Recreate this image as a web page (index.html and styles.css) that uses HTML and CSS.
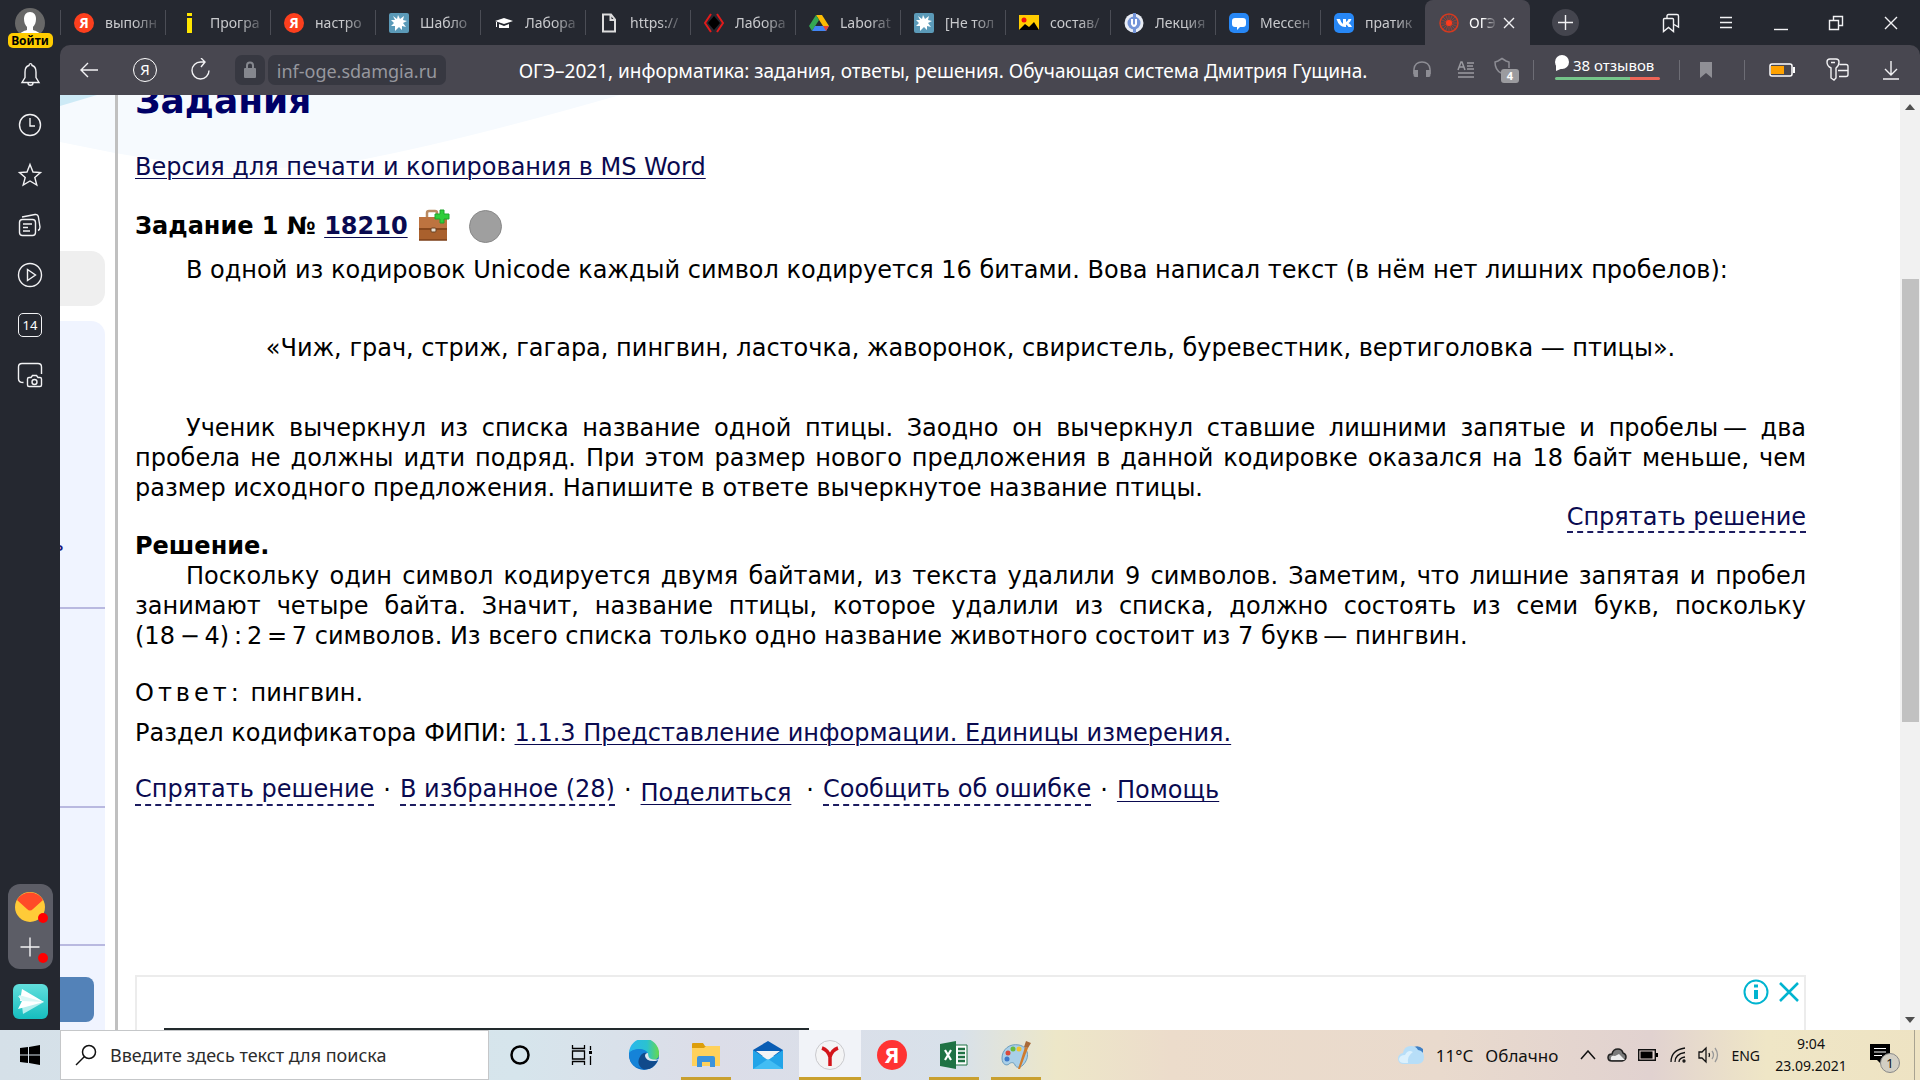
FILE: index.html
```html
<!DOCTYPE html>
<html lang="ru">
<head>
<meta charset="utf-8">
<title>ОГЭ–2021, информатика</title>
<link rel="stylesheet" href="styles.css">
</head>
<body>
<div class="browser">
  <aside class="rail">
    <button class="profile" aria-label="Профиль">
      <svg width="30" height="30" viewBox="0 0 30 30"><defs><clipPath id="av"><circle cx="15" cy="15" r="15"/></clipPath></defs><circle cx="15" cy="15" r="15" fill="#686868"/><g clip-path="url(#av)" fill="#fff"><path d="M15 4c4 0 6 3 6 7 0 3-1 6-3 8v3c3 1 8 2 9 8H3c1-6 6-7 9-8v-3c-2-2-3-5-3-8 0-4 2-7 6-7z"/></g></svg>
      <span class="login">Войти</span>
    </button>
    <nav class="rail-nav">
      <button aria-label="Уведомления"><svg class="ln" width="26" height="26" viewBox="0 0 26 26"><path d="M5 20.500h17l-3-5V10c0-4-2-6-4-6.500C15 1 12 1 12 3.500 10 4 8 6 8 10v5.500zM11 21c0 3 5 3 5 0"/></svg></button>
      <button aria-label="История"><svg class="ln" width="26" height="26" viewBox="0 0 26 26"><circle cx="13" cy="13" r="10.500"/><path d="M13 6v8h5"/></svg></button>
      <button aria-label="Избранное"><svg class="ln" width="26" height="26" viewBox="0 0 26 26"><path d="M13 2.500l3 7.500 7.500.500-5.700 5 2 7.500L13 19l-6.800 4 2-7.500-5.700-5L10 10z"/></svg></button>
      <button aria-label="Коллекции"><svg class="ln" width="26" height="26" viewBox="0 0 26 26"><rect x="2.500" y="7.500" width="16" height="16" rx="3"/><path d="M5 5l13-2.500c2-.3 3 .5 3.300 2L23 15c0 2-.7 3-2 3.500M6 12h9M6 15.500h5M6 19h7"/></svg></button>
      <button aria-label="Видео"><svg class="ln" width="26" height="26" viewBox="0 0 26 26"><circle cx="13" cy="13" r="11.500"/><path d="M10.500 7.500v11l8-5.500z"/></svg></button>
      <button aria-label="Календарь"><span class="date">14</span></button>
      <button aria-label="Снимок"><svg class="ln" width="26" height="26" viewBox="0 0 26 26"><path d="M6.500 20.500C3 20.500 1.500 19 1.500 17V5c0-2 1.500-3.500 3.500-3.500h16c2 0 3.500 1.500 3.500 3.500v7M10.500 17c0-1 .5-1.500 1.500-1.500h2l1.500-2h4l1.500 2h2c1 0 1.500.5 1.500 1.500v6c0 1-.5 1.500-1.500 1.500H12c-1 0-1.500-.5-1.500-1.500z"/><circle cx="17.500" cy="20" r="2.500"/></svg></button>
    </nav>
    <div class="dock">
      <button class="dotted" aria-label="Почта"><svg width="30" height="30" viewBox="0 0 30 30"><circle cx="15" cy="15" r="15" fill="#ffcb38"/><path d="M2 8A15 15 0 0 1 28 8L18 17q-3 3-6 0z" fill="#ff4a28"/></svg></button>
      <button class="dotted" aria-label="Добавить"><svg class="ln" width="30" height="30" viewBox="0 0 30 30"><path d="M15 5.500v19M5.500 15h19"/></svg></button>
    </div>
    <button class="send" aria-label="Мессенджер"><svg width="35" height="35" viewBox="0 0 35 35"><defs><linearGradient id="tq" x2="0" y2="1"><stop stop-color="#62dfdc"/><stop offset="1" stop-color="#16bebf"/></linearGradient></defs><rect width="35" height="35" rx="6" fill="url(#tq)"/><path d="M9 5l22 13-24-1z" fill="#fff"/><path d="M31 18L10 30l-1-8z" fill="#b5efee"/><path d="M5 12l4 5-4 8 26-7z" fill="#fff"/><path d="M6 11l3 6 22 1z" fill="#d9f7f6"/></svg></button>
  </aside>

  <div class="window">
    <header class="tabs">
      <a class="tab" href="#"><span class="ya">Я</span><span class="cap">выполн</span></a>
      <a class="tab" href="#"><svg width="20" height="20" viewBox="0 0 20 20"><path d="M8 0h5v3H8zM8 5h5v15H8z" fill="#ffe600"/></svg><span class="cap">Програ</span></a>
      <a class="tab" href="#"><span class="ya">Я</span><span class="cap">настро</span></a>
      <a class="tab" href="#"><svg width="20" height="20" viewBox="0 0 20 20"><rect width="20" height="20" rx="2" fill="#5b9ab8"/><path d="M4 3l4 3 1-4 2 4 4-3-1 4 4 1-4 2 3 4-4-1 0 4-3-3-4 4 0-5-4 0 3-3-3-3 4 0z" fill="#fff"/></svg><span class="cap">Шабло</span></a>
      <a class="tab" href="#"><svg width="20" height="20" viewBox="0 0 20 20"><path d="M1 8l9-3 9 3-9 3zM5 11l5 2 5-2v4H5zM2 9h1v5H2z" fill="#fff"/></svg><span class="cap">Лабора</span></a>
      <a class="tab" href="#"><svg width="20" height="20" viewBox="0 0 20 20"><path d="M4 1.500h8l4 5v12H4zM11.500 1.500V7H16" fill="none" stroke="#ddd" stroke-width="2"/></svg><span class="cap">https://</span></a>
      <a class="tab" href="#"><svg width="20" height="20" viewBox="0 0 20 20"><path d="M10 3l6 7-6 7-6-7z" fill="#000"/><path d="M7 1l-6 9 6 9M13 1l6 9-6 9" fill="none" stroke="#e11b1b" stroke-width="2"/></svg><span class="cap">Лабора</span></a>
      <a class="tab" href="#"><svg width="20" height="20" viewBox="0 0 20 20"><path d="M7 2h6l7 11h-6z" fill="#fbbc04"/><path d="M7 2l3 5-7 11-3-5z" fill="#34a853"/><path d="M6 13h14l-3 5H3z" fill="#4285f4"/><path d="M14 13h6l-3 5z" fill="#ea4335"/></svg><span class="cap">Laborat</span></a>
      <a class="tab" href="#"><svg width="20" height="20" viewBox="0 0 20 20"><rect width="20" height="20" rx="2" fill="#5b9ab8"/><path d="M4 3l4 3 1-4 2 4 4-3-1 4 4 1-4 2 3 4-4-1 0 4-3-3-4 4 0-5-4 0 3-3-3-3 4 0z" fill="#fff"/></svg><span class="cap">[Не тол</span></a>
      <a class="tab" href="#"><svg width="20" height="20" viewBox="0 0 20 20"><path d="M0 2h20v15H0z" fill="#fc0"/><path d="M0 17l6-6 4 3 5-5 5 8z" fill="#000"/><circle cx="5" cy="7" r="2.500" fill="#e11"/></svg><span class="cap">состав/</span></a>
      <a class="tab" href="#"><svg width="20" height="20" viewBox="0 0 20 20"><circle cx="10" cy="10" r="9.500" fill="#e8ecf4"/><path d="M9 0h3v4H9zM9 16h3v4H9z" fill="#7394d8"/><circle cx="10" cy="10" r="6.500" fill="#7394d8"/><path d="M8 6v5q2 4 4 0V6" fill="none" stroke="#fff" stroke-width="2"/></svg><span class="cap">Лекция</span></a>
      <a class="tab" href="#"><svg width="20" height="20" viewBox="0 0 20 20"><rect width="20" height="20" rx="5" fill="#2787f5"/><path d="M6 5h8q3 0 3 3v3q0 3-3 3h-3l-3 3v-3H6q-3 0-3-3V8q0-3 3-3z" fill="#fff"/></svg><span class="cap">Мессен</span></a>
      <a class="tab" href="#"><svg width="20" height="20" viewBox="0 0 20 20"><rect width="20" height="20" rx="5" fill="#2787f5"/><path d="M2.500 6h3.500q1 4 3 5V6h3v3q2-1 2.500-3h3q-1 3-3 4 2.500 1.500 3.500 4h-3.500q-1-2-2.500-2.500V14h-1q-6 0-8.500-8z" fill="#fff"/></svg><span class="cap">пратик</span></a>
      <a class="tab active" href="#"><svg width="20" height="20" viewBox="0 0 20 20"><g fill="none" stroke="#d23a20" stroke-width="1"><circle cx="10" cy="10" r="9" stroke-width="1.500"/><path d="M10 1v18M1 10h18M3.600 3.600l12.800 12.800M16.400 3.600L3.600 16.400M6.500 1.700l7 16.600M13.500 1.700l-7 16.600M1.700 6.500l16.600 7M1.700 13.500l16.600-7" stroke-width=".6"/></g><circle cx="10" cy="10" r="3" fill="#ff3a1c"/></svg><span class="cap">ОГЭ</span><svg class="ln" width="12" height="12" viewBox="0 0 12 12"><path d="M1 1l10 10M11 1L1 11"/></svg></a>
      <button class="newtab" aria-label="Новая вкладка"><svg class="ln" width="15" height="15" viewBox="0 0 15 15"><path d="M7.500 0v15M0 7.500h15"/></svg></button>
      <div class="wincontrols">
        <button aria-label="Закладки"><svg class="ln" width="20" height="20" viewBox="0 0 20 20"><path d="M2.500 6.500q0-1 1-1h8q1 0 1 1v12l-5-4-5 4zM6 5V3q0-1.500 1.500-1.500H16q1.500 0 1.500 1.500v11L13 11.500"/></svg></button>
        <button aria-label="Меню"><svg class="ln" width="20" height="20" viewBox="0 0 20 20"><path d="M4 4.500h12M4 9.500h12M4 14.500h12"/></svg></button>
        <button aria-label="Свернуть"><svg class="ln" width="20" height="20" viewBox="0 0 20 20"><path d="M3 16.500h14"/></svg></button>
        <button aria-label="Развернуть"><svg class="ln" width="20" height="20" viewBox="0 0 20 20"><path d="M3.500 7.500h9v9h-9zM7.500 7V3.500h9v9H13"/></svg></button>
        <button aria-label="Закрыть"><svg class="ln" width="20" height="20" viewBox="0 0 20 20"><path d="M4 4l12 12M16 4L4 16"/></svg></button>
      </div>
    </header>

    <div class="toolbar">
      <div class="nav">
        <button aria-label="Назад"><svg class="ln" width="24" height="24" viewBox="0 0 24 24"><path d="M21 12H4M11 5l-7 7 7 7"/></svg></button>
        <button aria-label="Яндекс"><span class="ya-ring">Я</span></button>
        <button aria-label="Обновить"><svg class="ln" width="24" height="24" viewBox="0 0 24 24"><path d="M20 12.500a8.500 8.500 0 1 1-8.500-8.500H16M12 0l4 4-4 5"/></svg></button>
      </div>
      <div class="address">
        <button class="lock" aria-label="Защищено"><svg width="14" height="18" viewBox="0 0 14 18"><rect x="1" y="7" width="12" height="10" rx="1" fill="#85878e"/><path d="M4 8V4.500q0-3 3-3t3 3V8" fill="none" stroke="#85878e" stroke-width="2"/></svg></button>
        <a class="domain" href="#">inf-oge.sdamgia.ru</a>
      </div>
      <div class="pagetitle">ОГЭ–2021, информатика: задания, ответы, решения. Обучающая система Дмитрия Гущина.</div>
      <div class="tools">
        <button aria-label="Слушать"><svg width="20" height="20" viewBox="0 0 20 20"><path d="M2 14V9q1-7 8-7t8 7v5" fill="none" stroke="#8d8d94" stroke-width="1.500"/><path d="M1.500 10H6v7H3q-1.500 0-1.500-2zM14 10h4.500v5q0 2-1.500 2h-3z" fill="#8d8d94"/></svg></button>
        <button aria-label="Режим чтения"><svg width="20" height="20" viewBox="0 0 20 20"><path d="M2 10l3-8h1l3 8M3 7h5M11 3h7M11 9h7M2 13h16M2 17h16M11 6h6" fill="none" stroke="#9a9aa0" stroke-width="1.500"/></svg></button>
        <button class="shield" aria-label="Блокировка"><svg width="26" height="26" viewBox="0 0 26 26"><path d="M8 16Q2 13 2 5l3-1 4-2.500L13 4l3 1v6" fill="none" stroke="#8d8d94" stroke-width="1.500"/></svg><span class="count">4</span></button>
        <i class="sep near"></i>
        <a class="reviews" href="#"><span class="revtext"><svg width="14" height="16" viewBox="0 0 14 16"><circle cx="7" cy="7" r="7" fill="#fff"/><path d="M1 10l0 6 7-3z" fill="#fff"/></svg>38 отзывов</span><span class="bar"></span></a>
        <i class="sep mid"></i>
        <button class="mark" aria-label="Закладка"><svg width="14" height="18" viewBox="0 0 14 18"><path d="M1 1h12v16l-6-5-6 5z" fill="#8f8f95"/></svg></button>
        <i class="sep far"></i>
        <button aria-label="Батарея"><svg width="26" height="14" viewBox="0 0 26 14"><rect x="1" y="1" width="22" height="12" rx="2" fill="none" stroke="#fff" stroke-width="1.500"/><path d="M24 4h2v6h-2z" fill="#fff"/><path d="M2 3h13v8H2z" fill="#ffa200"/></svg></button>
        <button class="far" aria-label="Пароли"><svg class="ln" width="24" height="24" viewBox="0 0 24 24"><path d="M5 10Q1 8 1 4q0-3 3-3h6q3 0 3 3 0 4-3 6v10l-2 2-3-2zM5 4.500h4M13.500 6.500H20q2 0 2 2v8q0 2-2 2h-7M12 12.500h10"/></svg></button>
        <button class="far" aria-label="Загрузки"><svg class="ln" width="20" height="20" viewBox="0 0 20 20"><path d="M10 1v14M4 9l6 6 6-6M2 19h16"/></svg></button>
      </div>
    </div>

    <div class="viewport">
      <svg class="wave" width="600" height="80" viewBox="0 0 600 80"><path d="M0 0V47L55 58Q200 84 300 65T560 0z" fill="#f6fafe"/><path d="M0 0H37L0 11z" fill="#cdeaf6"/></svg>
      <div class="sidecol">
        <div class="greybox"></div>
        <div class="panel">
          <section class="s1"><a href="#">ь</a></section>
          <section class="s2"></section>
          <section class="s3"></section>
          <section class="s4"><button class="bluebtn" aria-label="Открыть"></button></section>
        </div>
      </div>
      <main class="article">
        <h1>Задания</h1>
        <p class="print"><a href="#">Версия для печати и копирования в MS Word</a></p>
        <div class="task">
          <span>Задание 1 № <a href="#">18210</a></span>
          <svg width="34" height="34" viewBox="0 0 34 34"><path d="M10 9V4q0-2 2-2h6q2 0 2 2v5" fill="none" stroke="#b98a62" stroke-width="2.500"/><path d="M2 8h28v23H2z" fill="#a9602d"/><path d="M2 8h28v11H2z" fill="#bd7340"/><path d="M2 20h28M2 31h28" stroke="#7c3f18" stroke-width="1.500"/><rect x="14" y="19" width="5" height="4" rx="1" fill="#e8e0d4" stroke="#6a4020"/><path d="M23 1h4v4h5v5h-5v4h-4v-4h-5V5h5z" fill="#2fce3b" stroke="#1ea52c"/></svg>
          <i class="status"></i>
        </div>
        <p class="ind">В одной из кодировок Unicode каждый символ кодируется 16 битами. Вова написал текст (в нём нет лишних пробелов):</p>
        <p class="birds">«Чиж, грач, стриж, гагара, пингвин, ласточка, жаворонок, свиристель, буревестник, вертиголовка — птицы».</p>
        <p class="ind">Ученик вычеркнул из списка название одной птицы. Заодно он вычеркнул ставшие лишними запятые и пробелы&#8239;— два пробела не должны идти подряд. При этом размер нового предложения в данной кодировке оказался на 18 байт меньше, чем размер исходного предложения. Напишите в ответе вычеркнутое название птицы.</p>
        <div class="hide"><a class="dash" href="#">Спрятать решение</a></div>
        <h2>Решение.</h2>
        <p class="ind">Поскольку один символ кодируется двумя байтами, из текста удалили 9 символов. Заметим, что лишние запятая и пробел занимают четыре байта. Значит, название птицы, которое удалили из списка, должно состоять из семи букв, поскольку (18&#8239;−&#8239;4)&#8239;:&#8239;2&#8239;=&#8239;7 символов. Из всего списка только одно название животного состоит из 7 букв&#8239;— пингвин.</p>
        <p class="answer"><span class="spaced">Ответ:</span> пингвин.</p>
        <p class="codif">Раздел кодификатора ФИПИ: <a href="#">1.1.3 Представление информации. Единицы измерения.</a></p>
        <div class="links"><a class="dash" href="#">Спрятать решение</a><span>·</span><a class="dash" href="#">В избранное (28)</a><span>·</span><a class="share" href="#">Поделиться</a><span>·</span><a class="dash" href="#">Сообщить об ошибке</a><span>·</span><a href="#">Помощь</a></div>
        <div class="ad">
          <div class="adicons">
            <button aria-label="Сведения"><svg width="26" height="26" viewBox="0 0 26 26"><circle cx="13" cy="13" r="11.500" fill="none" stroke="#00b4d0" stroke-width="2"/><path d="M11 5.500h4v3h-4zM11 11h4v9h-4z" fill="#00b4d0"/></svg></button>
            <button aria-label="Закрыть рекламу"><svg width="20" height="20" viewBox="0 0 20 20"><path d="M1 1l18 18M19 1L1 19" stroke="#00b4d0" stroke-width="2.500"/></svg></button>
          </div>
          <div class="adline"></div>
        </div>
      </main>
      <div class="scroll"><svg width="10" height="6" viewBox="0 0 10 6"><path d="M0 6l5-6 5 6z" fill="#505050"/></svg><div class="track"><div class="thumb"></div></div><svg width="10" height="6" viewBox="0 0 10 6"><path d="M0 0l5 6 5-6z" fill="#505050"/></svg></div>
    </div>
  </div>
</div>

<footer class="taskbar">
  <button class="start" aria-label="Пуск"><svg width="20" height="20" viewBox="0 0 20 20"><path d="M0 3l8-1v7.500H0zM9 2l11-2v9.500H9zM0 10.500h8V18l-8-1zM9 10.500h11V20L9 18z"/></svg></button>
  <label class="search"><svg width="22" height="22" viewBox="0 0 22 22"><circle cx="14" cy="8" r="6.500" fill="none" stroke="#111" stroke-width="1.500"/><path d="M9.500 12.500L1 21" stroke="#111" stroke-width="1.500"/></svg><input type="text" aria-label="Поиск" placeholder="Введите здесь текст для поиска"></label>
  <div class="apps">
    <button aria-label="Кортана"><svg width="20" height="20" viewBox="0 0 20 20"><circle cx="10" cy="10" r="8.500" fill="none" stroke="#000" stroke-width="2.500"/></svg></button>
    <button aria-label="Представление задач"><svg width="22" height="20" viewBox="0 0 22 20"><path d="M1.500 0v3.500h12V0M1.500 20v-3.500h12V20M1.500 6h12v8h-12zM19.500 1v4M19.500 11v9" fill="none" stroke="#000" stroke-width="1.300"/><path d="M18 6h3v3h-3z"/></svg></button>
    <button aria-label="Edge"><svg width="30" height="30" viewBox="0 0 30 30"><defs><linearGradient id="eg"><stop stop-color="#2ab7ee"/><stop offset=".6" stop-color="#2bc2d0"/><stop offset="1" stop-color="#67d94c"/></linearGradient></defs><circle cx="15" cy="15" r="15" fill="#0c6ec6"/><path d="M0 13A15 15 0 0 1 30 14q0 6-7 6-4 0-5-2 1-1 1-4c-1-4-12-7-19-1z" fill="url(#eg)"/><path d="M0 13C5 7 18 8 19 14q-3-3-7 1-5 6 0 13Q0 27 0 13z" fill="#1583d8"/><path d="M12 15q4-4 7-1-2 5 2 7 4 1 8-1-5 11-15 9-8-5-2-14z" fill="#114a8b"/><path d="M19 13q-3 0-3 3 1 5 8 5 5 0 6-2-4 1-8 0-3-1-3-6z" fill="#dfe6ef"/></svg></button>
    <button class="run" aria-label="Проводник"><svg width="28" height="24" viewBox="0 0 28 24"><path d="M0 1q0-1 1-1h10l2 3h14v20H0z" fill="#dd9e0b"/><path d="M0 5h12l2-2h14v20H0z" fill="#ffd15b"/><path d="M5 24v-9q0-2 2-2h14q2 0 2 2v9h-5v-5h-8v5z" fill="#3b93dc"/></svg></button>
    <button aria-label="Почта Windows"><svg width="30" height="28" viewBox="0 0 30 28"><path d="M0 9L15 0l15 9v6H0z" fill="#0a5db4"/><path d="M0 9l15 10 15-10v19H0z" fill="#23a4e8"/><path d="M3 10h24l-12 9z" fill="#f3f3f5"/><path d="M0 28l15-10 15 10z" fill="#42bdf4"/></svg></button>
    <button class="run wide" aria-label="Яндекс Браузер"><svg width="30" height="30" viewBox="0 0 30 30"><circle cx="15" cy="15" r="14.500" fill="#f4f4f5" stroke="#c9c9cd"/><path d="M7 8q6 2 8 9 2-7 8-9M15 15v11" fill="none" stroke="#d3151b" stroke-width="3.500"/></svg></button>
    <button aria-label="Яндекс"><span class="ya big">Я</span></button>
    <button class="run" aria-label="Excel"><svg width="28" height="28" viewBox="0 0 28 28"><path d="M15 4h12v20H15z" fill="#fff" stroke="#1f7244"/><path d="M18 8h7M18 12h7M18 16h7M18 20h7" stroke="#1f7244" stroke-width="2.500"/><path d="M0 3l16-3v28L0 25z" fill="#1f7244"/><path d="M5 9l6 10M11 9L5 19" stroke="#fff" stroke-width="2.200"/></svg></button>
    <button class="run" aria-label="Paint"><svg width="30" height="30" viewBox="0 0 30 30"><path d="M18 5C8 3 1 10 1 18c0 7 5 8 7 6s5-2 6 1 5 3 8 0c7-7 6-18-4-20z" fill="#a9cfe8" stroke="#6c9dbd"/><circle cx="12" cy="9" r="2.500" fill="#67bb3e"/><circle cx="7" cy="13" r="2.500" fill="#d94a3a"/><circle cx="18" cy="9" r="2.500" fill="#f2c230"/><circle cx="6" cy="19" r="2.500" fill="#3e79c9"/><path d="M17 29l7-22 3 1-8 21z" fill="#cf7b2c"/><path d="M23 7l2-6 5 2-3 5z" fill="#a86a3a"/></svg></button>
  </div>
  <div class="tray">
    <a class="weather" href="#"><svg width="26" height="20" viewBox="0 0 26 20"><path d="M14 3q6-4 11 1v8z" fill="#3e7fc4"/><path d="M6 19Q0 19 0 13.500 0 9 5 8q1-7 8-7 5 0 7 4 6 1 6 7t-6 7z" fill="#b7def8"/><path d="M6 18q-5 0-5-4 1-4 6-4 3-6 8-3-6 4-5 11z" fill="#dcf1fd"/></svg><span class="temp">11°C</span><span>Облачно</span></a>
    <svg width="16" height="10" viewBox="0 0 16 10"><path d="M1 9l7-8 7 8" fill="none" stroke="#111" stroke-width="1.500"/></svg>
    <svg width="20" height="14" viewBox="0 0 20 14"><path d="M5 13Q1 13 1 9.500T5 6q1-5 6-5 4 0 5 4 3 1 3 4t-4 4z" fill="#7b7b7b" stroke="#222" stroke-width="1.500"/><path d="M4 12q-1-5 4-4l4-2 6 6z" fill="#eee"/></svg>
    <svg width="20" height="12" viewBox="0 0 20 12"><path d="M.7.700h16.600v10.600H.7z" fill="none" stroke="#111" stroke-width="1.400"/><path d="M2.500 2.500h12v7h-12zM18 4h2v4h-2z"/></svg>
    <svg width="18" height="16" viewBox="0 0 18 16" fill="none" stroke="#111" stroke-width="1.300"><path d="M2 15Q2 3 16 1M6 15q0-8 10-9.500M10 15q0-4 6-5"/><circle cx="15" cy="14" r="1"/></svg>
    <svg width="22" height="18" viewBox="0 0 22 18" fill="none" stroke="#111" stroke-width="1.300"><path d="M1 6h3l4-4v14l-4-4H1zM11 7q1 2 0 4"/><path d="M14 5q3 4 0 8M17 2q5 7 0 14" stroke="#999"/></svg>
    <span class="lang">ENG</span>
    <time class="clock"><span>9:04</span><span>23.09.2021</span></time>
    <button class="notes" aria-label="Центр уведомлений"><svg width="20" height="20" viewBox="0 0 20 20"><path d="M0 0h20v16h-9v4l-4-4H0z"/><path d="M4 4.500h12M4 8h12M4 11.500h8" stroke="#fff" stroke-width="1.200"/></svg><span class="badge">1</span></button>
  </div>
</footer>
</body>
</html>
```
FILE: styles.css
```css
* { box-sizing: border-box; }
body {
  margin: 0;
  height: 100vh;
  display: flex;
  flex-direction: column;
  overflow: hidden;
  font-family: "Noto Sans", "Open Sans", sans-serif;
  font-size: 16px;
  background: #252830;
}
button {
  border: 0;
  padding: 0;
  margin: 0;
  background: none;
  color: inherit;
  font: inherit;
  display: flex;
  align-items: center;
  justify-content: center;
}
svg { display: block; flex: none; }
h1, h2, p { margin: 0; }
.ln { fill: none; stroke: #f2f2f4; stroke-width: 1.4; }

.browser { flex: 1; min-height: 0; display: flex; }

/* Left rail */
.rail {
  width: 60px;
  flex: none;
  display: flex;
  flex-direction: column;
  align-items: center;
  padding: 8px 0 11px;
  color: #fff;
}
.profile { flex-direction: column; height: 40px; justify-content: flex-start; }
.login {
  margin-top: -5px;
  width: 45px;
  height: 15px;
  border-radius: 5px;
  background: #fc0;
  color: #000;
  font-size: 12px;
  font-weight: 700;
  line-height: 15px;
}
.rail-nav { display: flex; flex-direction: column; gap: 24px; margin-top: 14px; }
.date {
  width: 24px;
  height: 24px;
  border: 1px solid #f2f2f4;
  border-radius: 5px;
  font-size: 13px;
  line-height: 22px;
}
.rail-nav button { height: 26px; }
.dock {
  margin-top: auto;
  width: 45px;
  height: 85px;
  border-radius: 12px;
  background: #5c5d66;
  display: flex;
  flex-direction: column;
  align-items: center;
  justify-content: space-between;
  padding: 8px 0 7px;
}
.dotted { position: relative; }
.dotted::after {
  content: "";
  position: absolute;
  right: -3px;
  bottom: -1px;
  width: 10px;
  height: 10px;
  border-radius: 50%;
  background: #f00;
}
.send { margin-top: 15px; }

/* Tab strip */
.window { flex: 1; min-width: 0; display: flex; flex-direction: column; }
.tabs { height: 45px; flex: none; display: flex; align-items: center; }
.tab {
  width: 105px;
  height: 25px;
  flex: none;
  display: flex;
  align-items: center;
  gap: 11px;
  padding: 0 2px 0 13px;
  border-left: 1px solid #4b4d55;
  color: #c9cacd;
  font-size: 14px;
  text-decoration: none;
}
.cap {
  flex: 1;
  min-width: 0;
  overflow: hidden;
  white-space: nowrap;
  -webkit-mask-image: linear-gradient(90deg, #000 50%, transparent);
  mask-image: linear-gradient(90deg, #000 50%, transparent);
}
.tab.active {
  height: 45px;
  background: #484750;
  border-left: 0;
  border-radius: 8px 8px 0 0;
  color: #fff;
  padding: 0 15px 0 14px;
  gap: 10px;
}
.active .cap { margin-right: -4px; }
.ya {
  width: 20px;
  height: 20px;
  flex: none;
  border-radius: 50%;
  background: #fc3f1d;
  color: #fff;
  font-size: 14px;
  font-weight: 700;
  line-height: 20px;
  text-align: center;
}
.ya.big { width: 30px; height: 30px; background: #ff3333; font-size: 22px; line-height: 29px; }
.newtab {
  width: 27px;
  height: 27px;
  margin-left: 22px;
  border-radius: 50%;
  background: #44454e;
}
.wincontrols { display: flex; gap: 35px; margin-left: auto; padding-right: 19px; }

/* Toolbar */
.toolbar {
  height: 50px;
  flex: none;
  display: flex;
  align-items: center;
  background: #484750;
  border-radius: 10px 10px 0 0;
  padding: 0 19px 0 17px;
  color: #fff;
}
.nav { display: flex; gap: 32px; }
.ya-ring {
  width: 24px;
  height: 24px;
  border: 1px solid #fff;
  border-radius: 50%;
  font-size: 15px;
  line-height: 21px;
}
.address { display: flex; gap: 3px; margin-left: 22px; }
.lock { width: 30px; height: 30px; border-radius: 7px; background: #373841; }
.domain {
  width: 178px;
  height: 30px;
  border-radius: 7px;
  background: #373841;
  color: #96979e;
  font-size: 18px;
  line-height: 32px;
  text-align: center;
  text-decoration: none;
}
.pagetitle {
  flex: 1;
  min-width: 0;
  padding: 2px 0 0 52px;
  text-align: center;
  white-space: nowrap;
  font-size: 19px;
}
.tools { display: flex; align-items: center; }
.tools > * { margin-left: 24px; }
.sep { width: 1px; height: 20px; background: #6d6d75; }
.tools > .shield { position: relative; margin-left: 17px; }
.tools > .near { margin-left: 14px; }
.tools > .mid, .tools > .mark { margin-left: 19px; }
.tools > .far { margin-left: 31px; }
.count {
  position: absolute;
  right: 0;
  bottom: 0;
  width: 18px;
  height: 14px;
  border-radius: 3px;
  background: #9b9b9f;
  font-size: 11px;
  font-weight: 700;
  line-height: 14px;
}
.tools > .reviews { margin: 0 0 5px 21px; }
.reviews { width: 105px; color: #fff; text-decoration: none; }
.revtext { display: flex; gap: 4px; font-size: 15px; line-height: 20px; white-space: nowrap; }
.bar {
  display: block;
  height: 3px;
  margin-top: 2px;
  border-radius: 2px;
  background: linear-gradient(90deg, #75c48a 71%, #ee6557 71%);
}

/* Page */
.viewport {
  flex: 1;
  min-height: 0;
  position: relative;
  display: flex;
  overflow: hidden;
  background: #fff;
  font-family: "DejaVu Sans", Verdana, sans-serif;
  font-size: 24px;
  line-height: 30px;
  color: #000;
}
.wave { position: absolute; left: 0; top: 0; }
.sidecol, .article, .scroll { position: relative; }
.sidecol {
  width: 58px;
  flex: none;
  padding: 156px 10px 0 0;
  border-right: 3px solid #c0c0c0;
  display: flex;
  flex-direction: column;
}
.greybox { height: 55px; flex: none; border-radius: 0 14px 14px 0; background: #efefef; }
.panel {
  flex: 1;
  margin-top: 15px;
  border-radius: 0 14px 0 0;
  background: #f0f4ff;
  overflow: hidden;
  display: flex;
  flex-direction: column;
}
.panel section { border-bottom: 2px solid #b9b9e0; flex: none; }
.s1 { height: 288px; padding-top: 208px; }
.s1 a { display: block; margin-left: -8px; font-size: 20px; color: #1a1a80; text-decoration: none; }
.s2 { height: 199px; }
.s3 { height: 138px; }
.panel .s4 { flex: 1; border: 0; padding-top: 31px; }
.bluebtn { width: 34px; height: 45px; border-radius: 0 8px 8px 0; background: #5382b8; }

.article { flex: 1; min-width: 0; margin: -15px 94px 0 17px; }
.article a { color: #0a0a50; text-decoration-thickness: 1px; text-underline-offset: 3px; }
h1 { font-size: 36px; line-height: 42px; color: #006; }
.print { margin-top: 30px; }
.task {
  height: 30px;
  margin: 29px 0 14px;
  display: flex;
  align-items: center;
  font-weight: 700;
}
.task svg { margin-left: 9px; }
.status {
  width: 33px;
  height: 33px;
  margin-left: 18px;
  border: 1px solid #888;
  border-radius: 50%;
  background: #9f9f9f;
}
.ind { text-indent: 51px; text-align: justify; }
.birds { margin: 48px 0 50px; text-align: center; }
.hide { line-height: 28px; text-align: right; }
.article .dash { text-decoration: none; border-bottom: 2px dashed #1c1c60; }
h2 { font-size: 24px; line-height: 30px; }
.answer { margin-top: 27px; }
.spaced { letter-spacing: 4px; }
.codif { margin-top: 10px; }
.links { display: flex; align-items: flex-start; gap: 9px; margin-top: 27px; }
.links .dash { line-height: 29px; }
.share { padding-top: 3px; margin-right: 6px; }
.ad {
  margin-top: 167px;
  height: 300px;
  border: 2px solid #ececec;
  padding-top: 2px;
}
.adicons { display: flex; align-items: center; justify-content: flex-end; gap: 10px; padding-right: 5px; }
.adline { width: 645px; height: 2px; margin: 23px 0 0 27px; background: #222a2d; }

.scroll {
  width: 20px;
  flex: none;
  display: flex;
  flex-direction: column;
  align-items: center;
  justify-content: space-between;
  padding: 9px 0 7px;
  background: #f1f1f1;
}
.track { flex: 1; width: 17px; padding-top: 169px; }
.thumb { height: 443px; background: #c1c1c1; }

/* Taskbar */
.taskbar {
  height: 50px;
  flex: none;
  display: flex;
  background: linear-gradient(90deg, #d5e0e8 0, #d6e5ec 27%, #dcdde8 37%, #d8e1ea 50%, #ede7c8 55%, #ecdccb 61%, #e9dacd 75%, #e1d2d0 86%, #efe6c6 92%, #eee3c3 100%);
  color: #111;
}
.start { width: 60px; }
.search {
  width: 429px;
  display: flex;
  align-items: center;
  gap: 13px;
  padding-left: 14px;
  background: #fff;
  border: 1px solid #c5c7c9;
}
.search input {
  flex: 1;
  min-width: 0;
  border: 0;
  padding: 0;
  outline: 0;
  font-family: inherit;
  font-size: 18px;
}
.search input::placeholder { color: #2c2c2c; opacity: 1; }
.apps { display: flex; }
.apps button { width: 62px; position: relative; }
.apps .wide { background: #f1f3f8; }
.run::after {
  content: "";
  position: absolute;
  left: 6px;
  right: 6px;
  bottom: 0;
  height: 3px;
  background: #c9a02f;
}
.wide::after { left: 0; right: 0; }
.tray {
  flex: 1;
  display: flex;
  align-items: center;
  justify-content: flex-end;
  gap: 11px;
  margin-right: 5px;
  border-right: 1px solid #a9a391;
  padding-right: 13px;
}
.weather { display: flex; align-items: center; gap: 12px; margin-right: 11px; color: #111; text-decoration: none; font-size: 17px; }
.lang { font-size: 14px; }
.clock { width: 80px; display: flex; flex-direction: column; text-align: center; font-size: 14px; line-height: 22px; }
.notes { position: relative; width: 31px; height: 34px; align-items: flex-start; justify-content: flex-start; margin-left: 8px; padding-top: 6px; }
.badge {
  position: absolute;
  right: 1px;
  bottom: -1px;
  width: 20px;
  height: 20px;
  border: 1px solid #888;
  border-radius: 50%;
  background: #d3cfc3;
  font-size: 13px;
  line-height: 18px;
}
```
